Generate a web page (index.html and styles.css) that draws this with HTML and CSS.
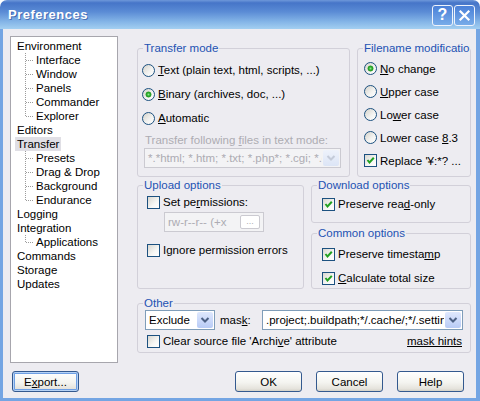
FILE: index.html
```html
<!DOCTYPE html>
<html lang="en">

<head>
    <meta charset="UTF-8">
    <meta name="viewport" content="width=device-width, initial-scale=1.0">
    <title>Preferences</title>
    <link rel="stylesheet" href="styles.css">
</head>

<body>
    <div class="window">
        <div class="titlebar">
            <span class="title">Preferences</span>
            <div class="caption">
                <span class="cap-btn">?</span>
                <span class="cap-btn">
                    <svg width="13" height="13" viewBox="0 0 13 13">
                        <path d="M2.5 2.5 L10.5 10.5 M10.5 2.5 L2.5 10.5" stroke="#fff" stroke-width="2.2" stroke-linecap="square" />
                    </svg>
                </span>
            </div>
        </div>

        <div class="frame">
            <div class="main">
                <!-- page tree -->
                <ul class="tree">
                    <li><span class="label">Environment</span>
                        <ul class="sub">
                            <li><span class="label">Interface</span></li>
                            <li><span class="label">Window</span></li>
                            <li><span class="label">Panels</span></li>
                            <li><span class="label">Commander</span></li>
                            <li class="last"><span class="label">Explorer</span></li>
                        </ul>
                    </li>
                    <li><span class="label">Editors</span></li>
                    <li><span class="label selected">Transfer</span>
                        <ul class="sub">
                            <li><span class="label">Presets</span></li>
                            <li><span class="label">Drag &amp; Drop</span></li>
                            <li><span class="label">Background</span></li>
                            <li class="last"><span class="label">Endurance</span></li>
                        </ul>
                    </li>
                    <li><span class="label">Logging</span></li>
                    <li><span class="label">Integration</span>
                        <ul class="sub">
                            <li class="last"><span class="label">Applications</span></li>
                        </ul>
                    </li>
                    <li><span class="label">Commands</span></li>
                    <li><span class="label">Storage</span></li>
                    <li><span class="label">Updates</span></li>
                </ul>

                <!-- transfer page -->
                <div class="pages">
                    <div class="row row-top">
                        <fieldset class="group transfer">
                            <legend>Transfer mode</legend>
                            <div class="body">
                                <div class="opt"><span class="radio"></span><span><u>T</u>ext (plain text, html, scripts, ...)</span></div>
                                <div class="opt"><span class="radio on"></span><span><u>B</u>inary (archives, doc, ...)</span></div>
                                <div class="opt"><span class="radio"></span><span><u>A</u>utomatic</span></div>
                                <div class="note disabled">Transfer following <u>f</u>iles in text mode:</div>
                                <div class="combo disabled masks">
                                    <span class="val">*.*html; *.htm; *.txt; *.php*; *.cgi; *.c; *.cpp</span>
                                    <span class="drop"><svg width="10" height="8" viewBox="0 0 10 8"><polyline points="1.5,2 5,5.5 8.5,2" fill="none" stroke-width="2" /></svg></span>
                                </div>
                            </div>
                        </fieldset>

                        <fieldset class="group naming">
                            <legend>Filename modification</legend>
                            <div class="body">
                                <div class="opt"><span class="radio on"></span><span><u>N</u>o change</span></div>
                                <div class="opt"><span class="radio"></span><span><u>U</u>pper case</span></div>
                                <div class="opt"><span class="radio"></span><span>Lo<u>w</u>er case</span></div>
                                <div class="opt"><span class="radio"></span><span>Lower case <u>8</u>.3</span></div>
                                <div class="opt"><span class="check"><svg width="11" height="11" viewBox="0 0 11 11"><polyline points="2.5,5 4.5,7.5 8.8,2.8" fill="none" stroke="#21a121" stroke-width="2" /></svg></span><span>Replace '¥:*? ...</span></div>
                            </div>
                        </fieldset>
                    </div>

                    <div class="row row-mid">
                        <fieldset class="group upload">
                            <legend>Upload options</legend>
                            <div class="body">
                                <div class="opt"><span class="check"></span><span>Set pe<u>r</u>missions:</span></div>
                                <div class="perm disabled"><span>rw-r--r-- (+x</span><span class="dots">...</span></div>
                                <div class="opt ignore"><span class="check"></span><span>I<u>g</u>nore permission errors</span></div>
                            </div>
                        </fieldset>

                        <div class="side">
                            <fieldset class="group download">
                                <legend>Download options</legend>
                                <div class="body">
                                    <div class="opt"><span class="check"><svg width="11" height="11" viewBox="0 0 11 11"><polyline points="2.5,5 4.5,7.5 8.8,2.8" fill="none" stroke="#21a121" stroke-width="2" /></svg></span><span>Preserve rea<u>d</u>-only</span></div>
                                </div>
                            </fieldset>
                            <fieldset class="group common">
                                <legend>Common options</legend>
                                <div class="body">
                                    <div class="opt"><span class="check"><svg width="11" height="11" viewBox="0 0 11 11"><polyline points="2.5,5 4.5,7.5 8.8,2.8" fill="none" stroke="#21a121" stroke-width="2" /></svg></span><span>Preserve timesta<u>m</u>p</span></div>
                                    <div class="opt second"><span class="check"><svg width="11" height="11" viewBox="0 0 11 11"><polyline points="2.5,5 4.5,7.5 8.8,2.8" fill="none" stroke="#21a121" stroke-width="2" /></svg></span><span><u>C</u>alculate total size</span></div>
                                </div>
                            </fieldset>
                        </div>
                    </div>

                    <div class="row row-low">
                        <fieldset class="group other">
                            <legend>Other</legend>
                            <div class="body">
                                <div class="combo-row">
                                    <div class="combo exclude">
                                        <span class="val">Exclude</span>
                                        <span class="drop"><svg width="10" height="8" viewBox="0 0 10 8"><polyline points="1.5,2 5,5.5 8.5,2" fill="none" stroke-width="2" /></svg></span>
                                    </div>
                                    <span class="mask-label">mas<u>k</u>:</span>
                                    <div class="combo filemask">
                                        <span class="val">.project;.buildpath;*/.cache/;*/.settings/;*/.svn/</span>
                                        <span class="drop"><svg width="10" height="8" viewBox="0 0 10 8"><polyline points="1.5,2 5,5.5 8.5,2" fill="none" stroke-width="2" /></svg></span>
                                    </div>
                                </div>
                                <div class="opt archive"><span class="check"></span><span>Clear source file 'Archi<u>v</u>e' attribute</span><span class="hint">mask hints</span></div>
                            </div>
                        </fieldset>
                    </div>
                </div>
            </div>

            <div class="buttons">
                <button class="btn focus export">E<u>x</u>port...</button>
                <button class="btn">OK</button>
                <button class="btn">Cancel</button>
                <button class="btn">Help</button>
            </div>
        </div>
    </div>
</body>

</html>
```

FILE: styles.css
```css
* {
    box-sizing: border-box;
}

body {
    margin: 0;
    background: #fff;
    font-family: "Liberation Sans", Arial, sans-serif;
    font-size: 11.5px;
    color: #000;
}

.window {
    width: 480px;
    height: 401px;
    display: flex;
    flex-direction: column;
}

/* caption */

.titlebar {
    height: 29px;
    flex: none;
    display: flex;
    align-items: center;
    padding: 0 5px 0 8px;
    border-radius: 7px 7px 0 0;
    background: linear-gradient(#6e98da 0%, #4675c8 10%, #5a8bd5 40%, #84b5e7 75%, #a3cff1 100%);
}

.title {
    flex: 1;
    color: #fff;
    font-weight: bold;
    font-size: 13px;
    letter-spacing: .5px;
    text-shadow: 1px 1px 0 rgba(30, 60, 140, .55);
}

.caption {
    display: flex;
    gap: 1px;
    margin-top: 1px;
}

.cap-btn {
    width: 21px;
    height: 21px;
    display: flex;
    align-items: center;
    justify-content: center;
    border: 1px solid #eef3fc;
    border-radius: 3px;
    background: linear-gradient(#4a80d8, #78ace9);
    color: #fff;
    font-weight: bold;
    font-size: 16px;
}

/* client area */

.frame {
    flex: 1;
    display: flex;
    flex-direction: column;
    background: #edecf1;
    border-style: solid;
    border-color: #74a5e3;
    border-width: 0 4px 3px 3px;
    padding: 7px 5px 6px 7px;
}

.main {
    display: flex;
    gap: 19px;
    height: 327px;
}

/* tree */

.tree {
    width: 108px;
    margin: 0;
    padding: 2px 0 0;
    list-style: none;
    background: #fff;
    border: 1px solid #a7a6ad;
}

.tree ul {
    margin: 0;
    padding: 0;
    list-style: none;
}

.tree li {
    display: block;
    line-height: 14px;
}

.tree .label {
    display: block;
    width: fit-content;
    height: 14px;
    padding: 0 2px;
    margin-left: 4px;
    white-space: nowrap;
}

.tree .sub li {
    padding-left: 23px;
    background:
        repeating-linear-gradient(to right, #9c9c9c 0 1px, transparent 1px 2px) 15px 7px / 8px 1px no-repeat,
        repeating-linear-gradient(to bottom, #9c9c9c 0 1px, transparent 1px 2px) 14px 0 / 1px 14px no-repeat;
}

.tree .sub li.last {
    background:
        repeating-linear-gradient(to right, #9c9c9c 0 1px, transparent 1px 2px) 15px 7px / 8px 1px no-repeat,
        repeating-linear-gradient(to bottom, #9c9c9c 0 1px, transparent 1px 2px) 14px 0 / 1px 8px no-repeat;
}

.tree .sub .label {
    margin-left: 0;
}

.tree .selected {
    background: #e0dfe5;
}

/* pages */

.pages {
    width: 334px;
    padding-top: 5px;
    display: flex;
    flex-direction: column;
}

.row {
    display: flex;
    gap: 7px;
}

.row-top {
    height: 136px;
}

.row-mid {
    height: 111px;
    margin-top: 1px;
}

.row-low {
    height: 57px;
    margin-top: 7px;
}

.group {
    margin: 0;
    padding: 0;
    min-width: 0;
    border: 1px solid #d2d0d9;
    border-radius: 3px;
}

.group legend {
    margin-left: 5px;
    padding: 0 1px;
    line-height: 14px;
    color: #2352b3;
}

.transfer {
    width: 213px;
    height: 136px;
}

.naming {
    width: 114px;
    height: 136px;
}

.naming legend {
    max-width: 107px;
    overflow: hidden;
    white-space: nowrap;
}

.upload {
    width: 167px;
    height: 111px;
}

.side {
    width: 160px;
    display: flex;
    flex-direction: column;
    gap: 3px;
}

.download {
    height: 45px;
}

.common {
    height: 63px;
}

.other {
    width: 100%;
    height: 57px;
}

/* controls */

.opt {
    display: flex;
    align-items: center;
    gap: 3px;
    height: 14px;
    white-space: nowrap;
}

.radio {
    width: 13px;
    height: 13px;
    flex: none;
    border: 1px solid #1c5180;
    border-radius: 50%;
    background: linear-gradient(135deg, #d4d2ca, #f4f4f2 60%, #fff);
}

.radio.on {
    background:
        radial-gradient(circle, #8fe68f 0, #33b033 1.5px, #1f961f 2.6px, transparent 3.3px),
        linear-gradient(135deg, #d4d2ca, #f4f4f2 60%, #fff);
}

.check {
    width: 13px;
    height: 13px;
    flex: none;
    border: 1px solid #1c5180;
    background: linear-gradient(135deg, #d8d7d0, #f7f7f5 60%, #fff);
    display: flex;
    align-items: center;
    justify-content: center;
}

.disabled {
    color: #adacb3;
}

.combo {
    display: flex;
    height: 20px;
    border: 1px solid #7f9db9;
    background: #fff;
}

.combo .val {
    flex: 1;
    min-width: 0;
    overflow: hidden;
    white-space: nowrap;
    padding-left: 3px;
    line-height: 18px;
}

.combo .drop {
    width: 16px;
    margin: 1px;
    flex: none;
    border-radius: 2px;
    background: linear-gradient(#dfe8fd, #b8cbf6);
    display: flex;
    align-items: center;
    justify-content: center;
}

.combo .drop svg {
    stroke: #4d6185;
}

.combo.disabled {
    border-color: #cbcad1;
    background: #f3f3f5;
}

.combo.disabled .drop {
    background: linear-gradient(#eef2fb, #dce5f6);
}

.combo.disabled .drop svg {
    stroke: #c4cbd9;
}

/* transfer mode */

.transfer .body {
    padding: 3px 0 0 4px;
}

.transfer .opt {
    height: 24px;
}

.note {
    margin-top: 3px;
    padding-left: 3px;
    line-height: 14px;
    white-space: nowrap;
}

.masks {
    width: 197px;
    margin: 1px 0 0 2px;
}

/* filename modification */

.naming .body {
    padding: 2px 0 0 6px;
}

.naming .opt {
    height: 23px;
}

/* upload */

.upload .body {
    padding: 3px 0 0 9px;
}

.perm {
    width: 100px;
    height: 20px;
    margin: 3px 0 0 17px;
    padding: 0 3px;
    display: flex;
    align-items: center;
    border: 1px solid #cbcad1;
    background: #f3f3f5;
    white-space: nowrap;
}

.perm .dots {
    margin-left: auto;
    width: 20px;
    height: 14px;
    border: 1px solid #cbcad1;
    border-radius: 2px;
    background: #fff;
    font-size: 9px;
    line-height: 10px;
    text-align: center;
}

.ignore {
    margin-top: 11px;
}

/* download / common */

.download .body {
    padding: 5px 0 0 10px;
}

.common .body {
    padding: 7px 0 0 10px;
}

.common .second {
    margin-top: 10px;
}

/* other */

.other .body {
    padding: 0 7px;
}

.combo-row {
    display: flex;
    align-items: center;
    height: 20px;
}

.exclude {
    width: 70px;
}

.mask-label {
    margin-left: 5px;
}

.filemask {
    width: 201px;
    margin-left: auto;
}

.archive {
    margin-top: 4px;
    padding-left: 2px;
}

.hint {
    margin-left: auto;
    padding-right: 1px;
    text-decoration: underline;
}

/* dialog buttons */

.buttons {
    display: flex;
    gap: 14px;
    margin: 8px 7px 0 2px;
}

.btn {
    width: 67px;
    height: 21px;
    padding: 0;
    font: inherit;
    color: #000;
    border: 1px solid #34598f;
    border-radius: 3px;
    background: linear-gradient(#fff, #f4f4f0 55%, #e5e3dc 88%, #d3d0c7);
}

.btn.focus {
    box-shadow: inset 0 0 0 1px #b6d2f5, inset 0 0 0 2px #6e9fe4;
}

.export {
    margin-right: auto;
}
```
